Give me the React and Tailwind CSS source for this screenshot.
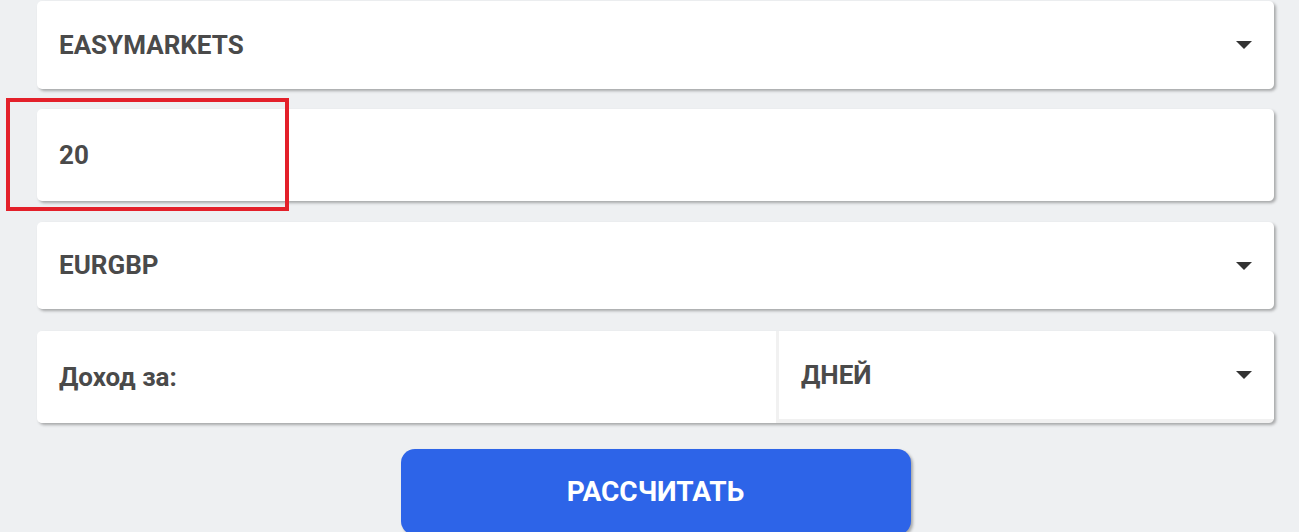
import React from 'react';

const font = { fontFamily: 'Roboto, "Noto Sans", sans-serif' };

function Caret() {
  return (
    <svg width="16" height="8" viewBox="0 0 16 8" className="shrink-0">
      <path d="M0 0h16L8 8z" fill="#333" />
    </svg>
  );
}

function SelectCard({ label, height }) {
  return (
    <div className={`${height} bg-white rounded-[5px] shadow-[2px_2px_3px_rgba(0,0,0,0.3)] flex items-center justify-between pl-[22px] pr-[22px]`}>
      <span className="text-[26px] font-bold text-[#4a4a4a]">{label}</span>
      <Caret />
    </div>
  );
}

export default function App() {
  return (
    <div className="min-h-screen bg-[#eef0f2] relative overflow-hidden" style={font}>
      <div className="pl-[37px] pr-[25px] pt-px flex flex-col">
        {/* Broker */}
        <SelectCard label="EASYMARKETS" height="h-[88px]" />

        {/* Amount */}
        <div className="mt-[20px] h-[92px] bg-white rounded-[5px] shadow-[2px_2px_3px_rgba(0,0,0,0.3)] flex items-center pl-[22px]">
          <span className="text-[26px] font-bold text-[#4a4a4a]">20</span>
        </div>

        {/* Pair */}
        <div className="mt-[21px]">
          <SelectCard label="EURGBP" height="h-[87px]" />
        </div>

        {/* Period */}
        <div className="mt-[22px] h-[92px] bg-[#f1f1f1] rounded-[5px] shadow-[2px_2px_3px_rgba(0,0,0,0.3)] flex">
          <div className="w-[739px] bg-white rounded-l-[5px] flex items-center pl-[22px]">
            <span className="text-[26px] font-bold text-[#4a4a4a]">Доход за:</span>
          </div>
          <div className="flex-1 ml-[3px] mb-[4px] bg-white rounded-tr-[5px] flex items-center justify-between pl-[22px] pr-[22px]">
            <span className="text-[26px] font-bold text-[#4a4a4a]">ДНЕЙ</span>
            <Caret />
          </div>
        </div>

        {/* Submit */}
        <div className="mt-[26px] flex justify-center">
          <button className="w-[510px] h-[86px] bg-[#2d64e8] rounded-[14px] shadow-[2px_2px_3px_rgba(0,0,0,0.3)] text-white text-[28px] font-bold">
            РАССЧИТАТЬ
          </button>
        </div>
      </div>

      {/* Annotation frame */}
      <div className="absolute left-[6px] top-[98px] w-[283px] h-[113px] border-4 border-[#e3202a]" />
    </div>
  );
}
